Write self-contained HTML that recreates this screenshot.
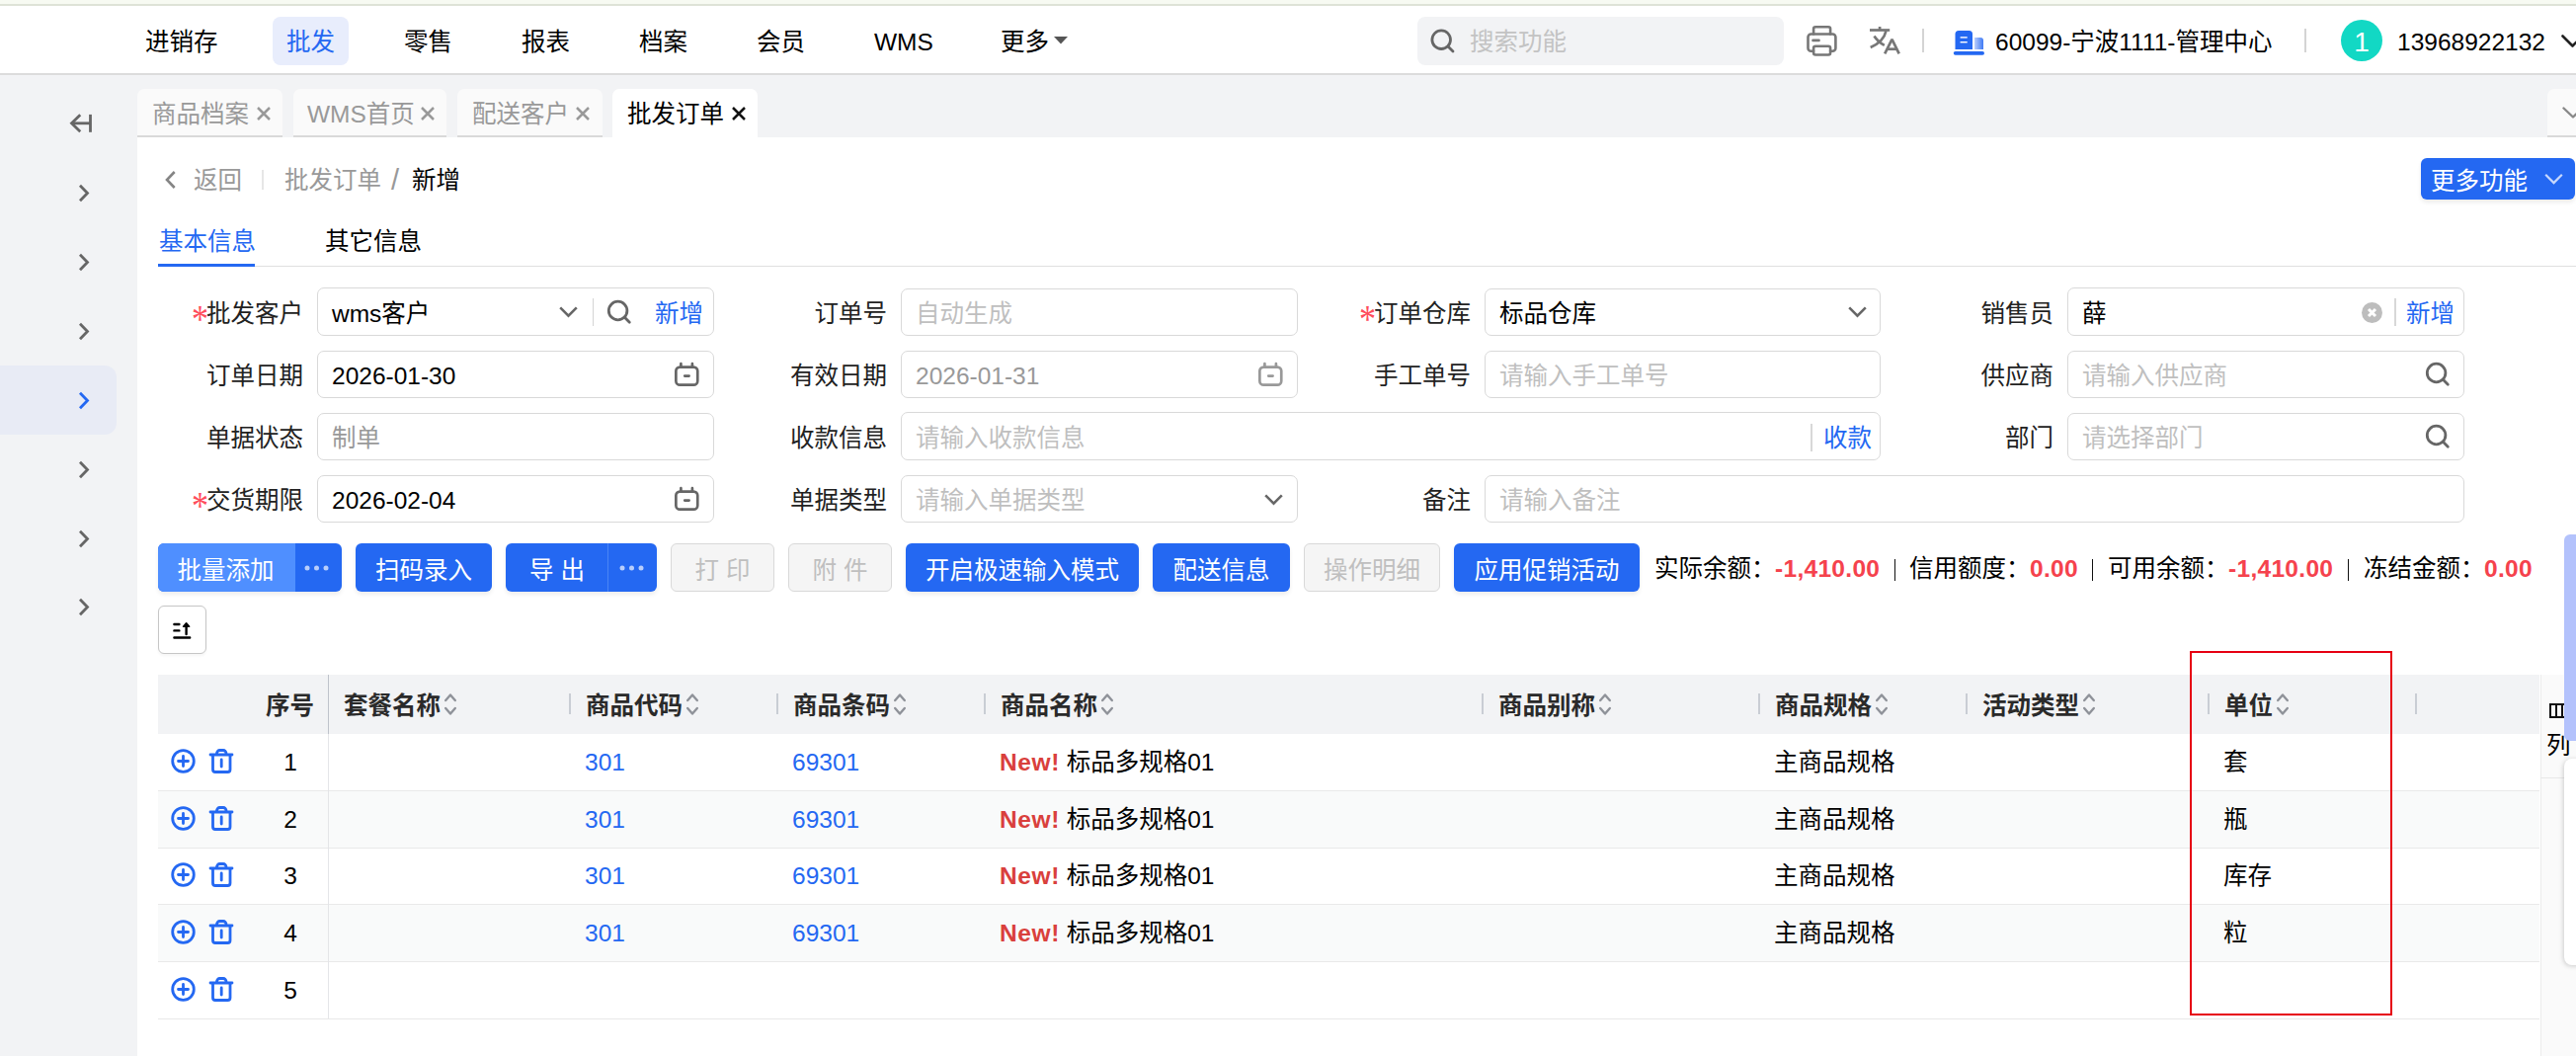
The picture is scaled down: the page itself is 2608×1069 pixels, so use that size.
<!DOCTYPE html>
<html lang="zh-CN">
<head>
<meta charset="utf-8">
<title>批发订单 - 新增</title>
<style>
*{box-sizing:border-box;margin:0;padding:0}
html,body{width:2608px;height:1069px;overflow:hidden;background:#fff}
body{font-family:"Liberation Sans","Noto Sans CJK SC",sans-serif;font-size:24.5px;color:#000;position:relative;line-height:1}
.abs{position:absolute}
.t{position:absolute;white-space:nowrap;line-height:32px;height:32px}
svg{position:absolute;overflow:visible}
#strip{left:0;top:0;width:2608px;height:6px;background:#f7faf2;border-bottom:2px solid #dee3d7}
#topbar{left:0;top:6px;width:2608px;height:70px;background:#fff;border-bottom:2px solid #dcdcdc}
.nav{top:27px}
#pill{left:276px;top:17px;width:77px;height:49px;border-radius:8px;background:#e8edfc}
#search{left:1435px;top:17px;width:371px;height:49px;border-radius:8px;background:#f2f3f5}
.vdiv{width:2px;background:#d4d4d4}
#graybg{left:0;top:76px;width:2608px;height:993px;background:#f2f3f5}
#content{left:139px;top:139px;width:2469px;height:930px;background:#fff}
.tab{top:90px;height:49px;border-radius:7px 7px 0 0;background:#fafafa;border-bottom:2px solid #d9d9d9}
.tab.on{background:#fff;border-bottom:none}
.tabt{top:100px;color:#999}
#sideon{left:0;top:370px;width:118px;height:70px;border-radius:0 12px 12px 0;background:#e8ebf5}
.inp{height:48px;border:1px solid #d9d9d9;border-radius:7px;background:#fff}
.lab{text-align:right;color:#222}
.ph{color:#bfbfbf}
.gr{color:#999}
.ls{letter-spacing:0}
.blue{color:#2468f2}
.star{color:#ff4d5c;font-family:"Liberation Serif",serif;font-size:34px;line-height:34px;width:17px;height:34px;text-align:center;transform:scaleY(1.15)}
.btn{top:550px;height:49px;border-radius:6px;background:#2468f2;color:#fff;text-align:center;line-height:49px;padding-top:3px;white-space:nowrap;box-shadow:0 3px 4px rgba(0,0,0,.07)}
.btn.dis{background:#f5f5f5;border:1px solid #d9d9d9;color:#bfbfbf;line-height:47px;padding-top:3px;box-shadow:none}
.red{color:#f5424d;font-weight:bold;letter-spacing:.3px}
#thead{left:160px;top:683px;width:2411px;height:60px;background:#f2f3f5}
.th{top:699px;font-weight:bold;color:#2a2a2a}
.cd{top:702px;width:2px;height:21px;background:#c9cdd4}
.row{left:160px;width:2412px;border-bottom:1px solid #e9e9e9}
.row.alt{background:#f9fafa}
.new{color:#d9403c;letter-spacing:.6px}
</style>
</head>
<body>
<div class="abs" id="graybg"></div>
<div class="abs" id="strip"></div>
<div class="abs" id="topbar"></div>
<div class="abs" id="content"></div>
<div class="abs" id="pill"></div>
<div class="t nav" style="left:147px">进销存</div>
<div class="t nav blue" style="left:290px">批发</div>
<div class="t nav" style="left:409px">零售</div>
<div class="t nav" style="left:528px">报表</div>
<div class="t nav" style="left:647px">档案</div>
<div class="t nav" style="left:766px">会员</div>
<div class="t nav" style="left:885px">WMS</div>
<div class="t nav" style="left:1013px">更多</div>
<svg style="left:1067px;top:37px" width="14" height="8" viewBox="0 0 14 8"><path d="M0 0h14l-7 7.500z" fill="#555"/></svg>
<div class="abs" id="search"></div>
<svg style="left:1448px;top:29px" width="25" height="25" viewBox="0 0 25 25" fill="none" stroke="#666" stroke-width="2.800" stroke-linecap="round"><circle cx="11.200" cy="11.200" r="9.300"/><path d="M18 18l5 5"/></svg>
<div class="t nav" style="left:1488px;color:#c3c3c3">搜索功能</div>
<svg style="left:1828px;top:25px" width="33" height="33" viewBox="0 0 33 33" fill="none" stroke="#777" stroke-width="2.600" stroke-linejoin="round" stroke-linecap="round"><path d="M8 26.800H5.500a3 3 0 0 1-3-3V12.500a3 3 0 0 1 3-3H27.400a3 3 0 0 1 3 3V23.800a3 3 0 0 1-3 3H25.100"/><path d="M8.100 9.500V4.300a2 2 0 0 1 2-2H23.100a2 2 0 0 1 2 2V9.500"/><rect x="8.100" y="21.700" width="17" height="8.800" rx="2"/><path d="M7.500 15.900H13.500"/></svg>
<svg style="left:1892px;top:26px" width="32" height="30" viewBox="0 0 32 30" fill="none" stroke="#777" stroke-width="2.700"><path d="M1 4.500H21.200"/><path d="M11.100 1V4.500"/><path d="M17.500 5.300C16 12 10 18.500 1.700 22"/><path d="M5.500 10.500C8 14.500 11.500 17.500 15.800 19.900"/><path d="M16.200 28.400L23.500 13.800L30.700 28.400" stroke-linejoin="bevel"/><path d="M18.800 23.700H28.200"/></svg>
<div class="abs vdiv" style="left:1946px;top:29px;height:24px"></div>
<svg style="left:1977px;top:30px" width="33" height="27" viewBox="0 0 33 27"><path d="M2.500 20.100V4.400a3.500 3.500 0 0 1 3.500-3.500H16.500a3.500 3.500 0 0 1 3.500 3.500V20.100Z" fill="#2468f2"/><rect x="7.600" y="7.200" width="7.100" height="1.400" fill="#fff"/><rect x="7.600" y="12" width="7.100" height="1.400" fill="#fff"/><rect x="0.800" y="22" width="31.200" height="3.700" rx="1.850" fill="#2468f2"/></svg>
<div class="abs" style="left:1999px;top:38px;width:9px;height:12px;border-radius:0 3px 0 0;background:linear-gradient(to right,#b9cdfb,#3f7af5)"></div>
<div class="t nav" style="left:2020px">60099-宁波1111-管理中心</div>
<div class="abs vdiv" style="left:2333px;top:29px;height:24px"></div>
<div class="abs" style="left:2370px;top:20px;width:42px;height:42px;border-radius:21px;background:#12d8c4"></div>
<div class="t nav" style="left:2370px;width:42px;text-align:center;color:#fff;font-size:28px">1</div>
<div class="t nav" style="left:2427px">13968922132</div>
<svg style="left:2593px;top:35px" width="24" height="13" viewBox="0 0 24 13" fill="none" stroke="#222" stroke-width="2.600" stroke-linecap="round" stroke-linejoin="round"><path d="M1.500 1.500l10 10 10-10"/></svg>
<div class="abs tab" style="left:139px;width:147px"></div>
<div class="abs tab" style="left:297px;width:155px"></div>
<div class="abs tab" style="left:463px;width:147px"></div>
<div class="abs tab on" style="left:620px;width:147px"></div>
<div class="abs tab" style="left:2579px;width:40px"></div>
<div class="t tabt" style="left:154px">商品档案</div>
<div class="t tabt" style="left:311px">WMS首页</div>
<div class="t tabt" style="left:478px">配送客户</div>
<div class="t tabt" style="left:635px;color:#000">批发订单</div>
<svg style="left:260px;top:108px" width="14" height="14" viewBox="0 0 14 14" stroke="#999" stroke-width="2.500" fill="none"><path d="M1 1l12 12M13 1L1 13"/></svg>
<svg style="left:426px;top:108px" width="14" height="14" viewBox="0 0 14 14" stroke="#999" stroke-width="2.500" fill="none"><path d="M1 1l12 12M13 1L1 13"/></svg>
<svg style="left:583px;top:108px" width="14" height="14" viewBox="0 0 14 14" stroke="#999" stroke-width="2.500" fill="none"><path d="M1 1l12 12M13 1L1 13"/></svg>
<svg style="left:741px;top:108px" width="14" height="14" viewBox="0 0 14 14" stroke="#111" stroke-width="2.500" fill="none"><path d="M1 1l12 12M13 1L1 13"/></svg>
<svg style="left:2594px;top:108px" width="22" height="12" viewBox="0 0 22 12" fill="none" stroke="#888" stroke-width="2.400" stroke-linecap="round" stroke-linejoin="round"><path d="M1.500 1.500l9.500 9 9.500-9"/></svg>
<div class="abs" id="sideon"></div>
<svg style="left:70px;top:114px" width="24" height="22" viewBox="0 0 24 22" fill="none" stroke="#666" stroke-width="2.800"><path d="M3 10.800H21"/><path d="M11.250 2.300L2.500 10.800l8.750 8.500"/><path d="M21.500 1.900v17.900"/></svg>
<svg style="left:79px;top:186px" width="12" height="19" viewBox="0 0 12 19" fill="none" stroke="#666" stroke-width="2.800"><path d="M2 1.800l7.500 7.700-7.500 7.700"/></svg>
<svg style="left:79px;top:256px" width="12" height="19" viewBox="0 0 12 19" fill="none" stroke="#666" stroke-width="2.800"><path d="M2 1.800l7.500 7.700-7.500 7.700"/></svg>
<svg style="left:79px;top:326px" width="12" height="19" viewBox="0 0 12 19" fill="none" stroke="#666" stroke-width="2.800"><path d="M2 1.800l7.500 7.700-7.500 7.700"/></svg>
<svg style="left:79px;top:396px" width="12" height="19" viewBox="0 0 12 19" fill="none" stroke="#2468f2" stroke-width="2.800"><path d="M2 1.800l7.500 7.700-7.500 7.700"/></svg>
<svg style="left:79px;top:466px" width="12" height="19" viewBox="0 0 12 19" fill="none" stroke="#666" stroke-width="2.800"><path d="M2 1.800l7.500 7.700-7.500 7.700"/></svg>
<svg style="left:79px;top:536px" width="12" height="19" viewBox="0 0 12 19" fill="none" stroke="#666" stroke-width="2.800"><path d="M2 1.800l7.500 7.700-7.500 7.700"/></svg>
<svg style="left:79px;top:605px" width="12" height="19" viewBox="0 0 12 19" fill="none" stroke="#666" stroke-width="2.800"><path d="M2 1.800l7.500 7.700-7.500 7.700"/></svg>
<svg style="left:166px;top:172px" width="13" height="20" viewBox="0 0 13 20" fill="none" stroke="#858585" stroke-width="2.600"><path d="M10.700 2L3 10l7.700 8"/></svg>
<div class="t" style="left:196px;top:167px;color:#999">返回</div>
<div class="abs" style="left:265px;top:172px;width:2px;height:20px;background:#e6e6e6"></div>
<div class="t" style="left:288px;top:167px;color:#999">批发订单</div>
<div class="t" style="left:396px;top:166px;color:#999;font-size:29px">/</div>
<div class="t" style="left:417px;top:167px;color:#000">新增</div>
<div class="abs" style="left:2451px;top:160px;width:156px;height:42px;border-radius:6px;background:#2468f2;box-shadow:0 3px 4px rgba(0,0,0,.08)"></div>
<div class="t" style="left:2461px;top:168px;color:#fff">更多功能</div>
<svg style="left:2576px;top:175px" width="19" height="12" viewBox="0 0 19 12" fill="none" stroke="#c8d8fc" stroke-width="2.200"><path d="M1.200 1.800l8.300 8.300 8.300-8.300"/></svg>
<div class="t blue" style="left:161px;top:229px">基本信息</div>
<div class="t" style="left:329px;top:229px">其它信息</div>
<div class="abs" style="left:160px;top:269px;width:2448px;height:1px;background:#e0e0e0"></div>
<div class="abs" style="left:160px;top:267px;width:98px;height:3px;background:#2468f2"></div>
<div class="abs inp" style="left:321px;top:291px;width:402px;height:49px"></div>
<div class="abs inp" style="left:321px;top:355px;width:402px;height:48px"></div>
<div class="abs inp" style="left:321px;top:418px;width:402px;height:48px"></div>
<div class="abs inp" style="left:321px;top:481px;width:402px;height:48px"></div>
<div class="abs inp" style="left:912px;top:292px;width:402px;height:48px"></div>
<div class="abs inp" style="left:912px;top:355px;width:402px;height:48px"></div>
<div class="abs inp" style="left:912px;top:417px;width:992px;height:49px"></div>
<div class="abs inp" style="left:912px;top:481px;width:402px;height:48px"></div>
<div class="abs inp" style="left:1503px;top:292px;width:401px;height:48px"></div>
<div class="abs inp" style="left:1503px;top:355px;width:401px;height:48px"></div>
<div class="abs inp" style="left:1503px;top:481px;width:992px;height:48px"></div>
<div class="abs inp" style="left:2093px;top:291px;width:402px;height:49px"></div>
<div class="abs inp" style="left:2093px;top:355px;width:402px;height:48px"></div>
<div class="abs inp" style="left:2093px;top:418px;width:402px;height:48px"></div>
<div class="t lab" style="left:147px;top:302px;width:160px">批发客户</div>
<div class="abs star" style="left:194.0px;top:306px">*</div>
<div class="t lab" style="left:147px;top:365px;width:160px">订单日期</div>
<div class="t lab" style="left:147px;top:428px;width:160px">单据状态</div>
<div class="t lab" style="left:147px;top:491px;width:160px">交货期限</div>
<div class="abs star" style="left:194.0px;top:495px">*</div>
<div class="t lab" style="left:738px;top:302px;width:160px">订单号</div>
<div class="t lab" style="left:738px;top:365px;width:160px">有效日期</div>
<div class="t lab" style="left:738px;top:428px;width:160px">收款信息</div>
<div class="t lab" style="left:738px;top:491px;width:160px">单据类型</div>
<div class="t lab" style="left:1329px;top:302px;width:160px">订单仓库</div>
<div class="abs star" style="left:1376.0px;top:306px">*</div>
<div class="t lab" style="left:1329px;top:365px;width:160px">手工单号</div>
<div class="t lab" style="left:1329px;top:491px;width:160px">备注</div>
<div class="t lab" style="left:1919px;top:302px;width:160px">销售员</div>
<div class="t lab" style="left:1919px;top:365px;width:160px">供应商</div>
<div class="t lab" style="left:1919px;top:428px;width:160px">部门</div>
<div class="t" style="left:336px;top:302px">wms客户</div>
<div class="t ls" style="left:336px;top:365px">2026-01-30</div>
<div class="t gr" style="left:336px;top:428px">制单</div>
<div class="t ls" style="left:336px;top:491px">2026-02-04</div>
<div class="t ph" style="left:927px;top:302px">自动生成</div>
<div class="t gr ls" style="left:927px;top:365px">2026-01-31</div>
<div class="t ph" style="left:927px;top:428px">请输入收款信息</div>
<div class="t ph" style="left:927px;top:491px">请输入单据类型</div>
<div class="t" style="left:1518px;top:302px">标品仓库</div>
<div class="t ph" style="left:1518px;top:365px">请输入手工单号</div>
<div class="t ph" style="left:1518px;top:491px">请输入备注</div>
<div class="t" style="left:2108px;top:302px">薛</div>
<div class="t ph" style="left:2108px;top:365px">请输入供应商</div>
<div class="t ph" style="left:2108px;top:428px">请选择部门</div>
<svg style="left:566px;top:310px" width="19" height="11" viewBox="0 0 19 11" fill="none" stroke="#666" stroke-width="2.600"><path d="M1.200 1.400l8.300 8.200 8.300-8.200"/></svg>
<div class="abs" style="left:600px;top:302px;width:1px;height:28px;background:#d4d4d4"></div>
<svg style="left:615px;top:304px" width="24" height="24" viewBox="0 0 24 24" fill="none" stroke="#666" stroke-width="2.800" stroke-linecap="round"><circle cx="10.600" cy="10.500" r="9.300"/><path d="M17.400 17.300l4.900 4.900"/></svg>
<div class="t blue" style="left:663px;top:302px">新增</div>
<svg style="left:683px;top:367px" width="25" height="24" viewBox="0 0 25 24" fill="none" stroke="#666" stroke-width="2.700" stroke-linecap="round" stroke-linejoin="round"><rect x="1.350" y="4.550" width="21.900" height="18.100" rx="4"/><path d="M6.400 1.200V4.500M17.900 1.200V4.500M10.200 13.600H14.600"/></svg>
<svg style="left:683px;top:493px" width="25" height="24" viewBox="0 0 25 24" fill="none" stroke="#666" stroke-width="2.700" stroke-linecap="round" stroke-linejoin="round"><rect x="1.350" y="4.550" width="21.900" height="18.100" rx="4"/><path d="M6.400 1.200V4.500M17.900 1.200V4.500M10.200 13.600H14.600"/></svg>
<svg style="left:1274px;top:367px" width="25" height="24" viewBox="0 0 25 24" fill="none" stroke="#999" stroke-width="2.700" stroke-linecap="round" stroke-linejoin="round"><rect x="1.350" y="4.550" width="21.900" height="18.100" rx="4"/><path d="M6.400 1.200V4.500M17.900 1.200V4.500M10.200 13.600H14.600"/></svg>
<svg style="left:1280px;top:500px" width="19" height="11" viewBox="0 0 19 11" fill="none" stroke="#666" stroke-width="2.600"><path d="M1.200 1.400l8.300 8.200 8.300-8.200"/></svg>
<svg style="left:1871px;top:310px" width="19" height="11" viewBox="0 0 19 11" fill="none" stroke="#666" stroke-width="2.600"><path d="M1.200 1.400l8.300 8.200 8.300-8.200"/></svg>
<div class="abs" style="left:1833px;top:429px;width:2px;height:28px;background:#d8d8d8"></div>
<div class="t blue" style="left:1846px;top:428px">收款</div>
<svg style="left:2391px;top:306px" width="21" height="21" viewBox="0 0 21 21"><circle cx="10.500" cy="10.500" r="10.450" fill="#bdbdbd"/><path d="M7 7l7 7M14 7l-7 7" stroke="#fff" stroke-width="3" stroke-linecap="butt"/></svg>
<div class="abs" style="left:2424px;top:302px;width:2px;height:28px;background:#d8d8d8"></div>
<div class="t blue" style="left:2436px;top:302px">新增</div>
<svg style="left:2456px;top:367px" width="24" height="24" viewBox="0 0 24 24" fill="none" stroke="#666" stroke-width="2.800" stroke-linecap="round"><circle cx="10.600" cy="10.500" r="9.300"/><path d="M17.400 17.300l4.900 4.900"/></svg>
<svg style="left:2456px;top:430px" width="24" height="24" viewBox="0 0 24 24" fill="none" stroke="#666" stroke-width="2.800" stroke-linecap="round"><circle cx="10.600" cy="10.500" r="9.300"/><path d="M17.400 17.300l4.900 4.900"/></svg>
<div class="abs btn" style="left:160px;width:186px"></div>
<div class="abs" style="left:160px;top:550px;width:139px;height:49px;border-radius:6px 0 0 6px;background:#4f8fff;color:#fff;text-align:center;line-height:49px;padding-top:3px;padding-right:2px">批量添加</div>
<svg style="left:308px;top:572px" width="25" height="6" viewBox="0 0 25 6" fill="#b9cefb"><circle cx="3" cy="3" r="2.500"/><circle cx="12.500" cy="3" r="2.500"/><circle cx="22" cy="3" r="2.500"/></svg>
<div class="abs btn" style="left:360px;width:138px">扫码录入</div>
<div class="abs btn" style="left:512px;width:153px"></div>
<div class="abs" style="left:512px;top:550px;width:104px;height:49px;color:#fff;text-align:center;line-height:49px;padding-top:3px">导 出</div>
<div class="abs" style="left:615px;top:550px;width:1px;height:49px;background:#4a84f5"></div>
<svg style="left:627px;top:572px" width="25" height="6" viewBox="0 0 25 6" fill="#b9cefb"><circle cx="3" cy="3" r="2.500"/><circle cx="12.500" cy="3" r="2.500"/><circle cx="22" cy="3" r="2.500"/></svg>
<div class="abs btn dis" style="left:679px;width:105px">打 印</div>
<div class="abs btn dis" style="left:798px;width:105px">附 件</div>
<div class="abs btn" style="left:917px;width:236px">开启极速输入模式</div>
<div class="abs btn" style="left:1167px;width:139px">配送信息</div>
<div class="abs btn dis" style="left:1320px;width:138px">操作明细</div>
<div class="abs btn" style="left:1472px;width:188px">应用促销活动</div>
<div class="t" style="left:1675px;top:560px">实际余额：</div>
<div class="t red" style="left:1797px;top:560px">-1,410.00</div>
<div class="t" style="left:1933px;top:560px">信用额度：</div>
<div class="t red" style="left:2055px;top:560px">0.00</div>
<div class="t" style="left:2134px;top:560px">可用余额：</div>
<div class="t red" style="left:2256px;top:560px">-1,410.00</div>
<div class="t" style="left:2393px;top:560px">冻结金额：</div>
<div class="t red" style="left:2515px;top:560px">0.00</div>
<div class="abs" style="left:1918px;top:566px;width:1px;height:22px;background:#111"></div>
<div class="abs" style="left:2118px;top:566px;width:1px;height:22px;background:#111"></div>
<div class="abs" style="left:2377px;top:566px;width:1px;height:22px;background:#111"></div>
<div class="abs" style="left:160px;top:613px;width:49px;height:49px;border:1px solid #c6c6c6;border-radius:6px;background:#fff;box-shadow:0 2px 3px rgba(0,0,0,.04)"></div>
<svg style="left:174px;top:629px" width="21" height="19" viewBox="0 0 21 19" fill="none" stroke="#000" stroke-width="2.400" stroke-linecap="round" stroke-linejoin="round"><path d="M2.400 3H7.400M2.400 9.400H7.400M2.400 16.500H18.200M14.600 5V13"/><path d="M14.600 1.800L11.600 5.200H17.600Z" fill="#000" stroke-width="1.600"/></svg>
<div class="abs" id="thead"></div>
<div class="abs" style="left:160px;top:800px;width:2411px;height:1px;background:#e9e9e9"></div>
<div class="abs" style="left:160px;top:801px;width:2411px;height:57px;background:#f9fafa"></div>
<div class="abs" style="left:160px;top:858px;width:2411px;height:1px;background:#e9e9e9"></div>
<div class="abs" style="left:160px;top:915px;width:2411px;height:1px;background:#e9e9e9"></div>
<div class="abs" style="left:160px;top:916px;width:2411px;height:57px;background:#f9fafa"></div>
<div class="abs" style="left:160px;top:973px;width:2411px;height:1px;background:#e9e9e9"></div>
<div class="abs" style="left:160px;top:1031px;width:2411px;height:1px;background:#e9e9e9"></div>
<div class="abs" style="left:332px;top:683px;width:1px;height:348px;background:#e4e5e8"></div>
<div class="abs" style="left:332px;top:683px;width:1px;height:60px;background:#bfc3cb"></div>
<div class="abs cd" style="left:576px"></div>
<div class="abs cd" style="left:786px"></div>
<div class="abs cd" style="left:996px"></div>
<div class="abs cd" style="left:1500px"></div>
<div class="abs cd" style="left:1780px"></div>
<div class="abs cd" style="left:1990px"></div>
<div class="abs cd" style="left:2235px"></div>
<div class="abs cd" style="left:2445px"></div>
<div class="t th" style="left:269px">序号</div>
<div class="t th" style="left:348px">套餐名称</div>
<svg style="left:450px;top:701px" width="12" height="24" viewBox="0 0 12 24" fill="none" stroke="#8f9299" stroke-width="2.400" stroke-linecap="round" stroke-linejoin="round"><path d="M1.200 8l4.800-5.500 4.800 5.500M1.200 16l4.800 5.500 4.800-5.500"/></svg>
<div class="t th" style="left:593px">商品代码</div>
<svg style="left:695px;top:701px" width="12" height="24" viewBox="0 0 12 24" fill="none" stroke="#8f9299" stroke-width="2.400" stroke-linecap="round" stroke-linejoin="round"><path d="M1.200 8l4.800-5.500 4.800 5.500M1.200 16l4.800 5.500 4.800-5.500"/></svg>
<div class="t th" style="left:803px">商品条码</div>
<svg style="left:905px;top:701px" width="12" height="24" viewBox="0 0 12 24" fill="none" stroke="#8f9299" stroke-width="2.400" stroke-linecap="round" stroke-linejoin="round"><path d="M1.200 8l4.800-5.500 4.800 5.500M1.200 16l4.800 5.500 4.800-5.500"/></svg>
<div class="t th" style="left:1013px">商品名称</div>
<svg style="left:1115px;top:701px" width="12" height="24" viewBox="0 0 12 24" fill="none" stroke="#8f9299" stroke-width="2.400" stroke-linecap="round" stroke-linejoin="round"><path d="M1.200 8l4.800-5.500 4.800 5.500M1.200 16l4.800 5.500 4.800-5.500"/></svg>
<div class="t th" style="left:1517px">商品别称</div>
<svg style="left:1619px;top:701px" width="12" height="24" viewBox="0 0 12 24" fill="none" stroke="#8f9299" stroke-width="2.400" stroke-linecap="round" stroke-linejoin="round"><path d="M1.200 8l4.800-5.500 4.800 5.500M1.200 16l4.800 5.500 4.800-5.500"/></svg>
<div class="t th" style="left:1797px">商品规格</div>
<svg style="left:1899px;top:701px" width="12" height="24" viewBox="0 0 12 24" fill="none" stroke="#8f9299" stroke-width="2.400" stroke-linecap="round" stroke-linejoin="round"><path d="M1.200 8l4.800-5.500 4.800 5.500M1.200 16l4.800 5.500 4.800-5.500"/></svg>
<div class="t th" style="left:2007px">活动类型</div>
<svg style="left:2109px;top:701px" width="12" height="24" viewBox="0 0 12 24" fill="none" stroke="#8f9299" stroke-width="2.400" stroke-linecap="round" stroke-linejoin="round"><path d="M1.200 8l4.800-5.500 4.800 5.500M1.200 16l4.800 5.500 4.800-5.500"/></svg>
<div class="t th" style="left:2252px">单位</div>
<svg style="left:2305px;top:701px" width="12" height="24" viewBox="0 0 12 24" fill="none" stroke="#8f9299" stroke-width="2.400" stroke-linecap="round" stroke-linejoin="round"><path d="M1.200 8l4.800-5.500 4.800 5.500M1.200 16l4.800 5.500 4.800-5.500"/></svg>
<svg style="left:173px;top:758px" width="25" height="25" viewBox="0 0 25 25" fill="none" stroke="#2468f2" stroke-width="2.800" stroke-linecap="round"><circle cx="12.500" cy="12.500" r="10.800"/><path d="M7.500 12.500h10M12.500 7.500v10"/></svg>
<svg style="left:211px;top:757px" width="26" height="26" viewBox="0 0 26 26" fill="none" stroke="#2468f2" stroke-width="2.800" stroke-linecap="round" stroke-linejoin="round"><path d="M2 7h22M8.500 6.500V5.500A3 3 0 0 1 11.500 2.500h3.500a3 3 0 0 1 3 3V6.500"/><path d="M4.500 7.500V22a2.500 2.500 0 0 0 2.500 2.500h12.500a2.500 2.500 0 0 0 2.500-2.500V7.500"/><path d="M13.200 12v7"/></svg>
<div class="t" style="left:270px;top:756px;width:48px;text-align:center">1</div>
<div class="t blue" style="left:592px;top:756px">301</div>
<div class="t blue" style="left:802px;top:756px">69301</div>
<div class="t" style="left:1012px;top:756px"><b class="new">New!</b> 标品多规格01</div>
<div class="t" style="left:1796px;top:756px">主商品规格</div>
<div class="t" style="left:2251px;top:756px">套</div>
<svg style="left:173px;top:816px" width="25" height="25" viewBox="0 0 25 25" fill="none" stroke="#2468f2" stroke-width="2.800" stroke-linecap="round"><circle cx="12.500" cy="12.500" r="10.800"/><path d="M7.500 12.500h10M12.500 7.500v10"/></svg>
<svg style="left:211px;top:815px" width="26" height="26" viewBox="0 0 26 26" fill="none" stroke="#2468f2" stroke-width="2.800" stroke-linecap="round" stroke-linejoin="round"><path d="M2 7h22M8.500 6.500V5.500A3 3 0 0 1 11.500 2.500h3.500a3 3 0 0 1 3 3V6.500"/><path d="M4.500 7.500V22a2.500 2.500 0 0 0 2.500 2.500h12.500a2.500 2.500 0 0 0 2.500-2.500V7.500"/><path d="M13.200 12v7"/></svg>
<div class="t" style="left:270px;top:814px;width:48px;text-align:center">2</div>
<div class="t blue" style="left:592px;top:814px">301</div>
<div class="t blue" style="left:802px;top:814px">69301</div>
<div class="t" style="left:1012px;top:814px"><b class="new">New!</b> 标品多规格01</div>
<div class="t" style="left:1796px;top:814px">主商品规格</div>
<div class="t" style="left:2251px;top:814px">瓶</div>
<svg style="left:173px;top:873px" width="25" height="25" viewBox="0 0 25 25" fill="none" stroke="#2468f2" stroke-width="2.800" stroke-linecap="round"><circle cx="12.500" cy="12.500" r="10.800"/><path d="M7.500 12.500h10M12.500 7.500v10"/></svg>
<svg style="left:211px;top:872px" width="26" height="26" viewBox="0 0 26 26" fill="none" stroke="#2468f2" stroke-width="2.800" stroke-linecap="round" stroke-linejoin="round"><path d="M2 7h22M8.500 6.500V5.500A3 3 0 0 1 11.500 2.500h3.500a3 3 0 0 1 3 3V6.500"/><path d="M4.500 7.500V22a2.500 2.500 0 0 0 2.500 2.500h12.500a2.500 2.500 0 0 0 2.500-2.500V7.500"/><path d="M13.200 12v7"/></svg>
<div class="t" style="left:270px;top:871px;width:48px;text-align:center">3</div>
<div class="t blue" style="left:592px;top:871px">301</div>
<div class="t blue" style="left:802px;top:871px">69301</div>
<div class="t" style="left:1012px;top:871px"><b class="new">New!</b> 标品多规格01</div>
<div class="t" style="left:1796px;top:871px">主商品规格</div>
<div class="t" style="left:2251px;top:871px">库存</div>
<svg style="left:173px;top:931px" width="25" height="25" viewBox="0 0 25 25" fill="none" stroke="#2468f2" stroke-width="2.800" stroke-linecap="round"><circle cx="12.500" cy="12.500" r="10.800"/><path d="M7.500 12.500h10M12.500 7.500v10"/></svg>
<svg style="left:211px;top:930px" width="26" height="26" viewBox="0 0 26 26" fill="none" stroke="#2468f2" stroke-width="2.800" stroke-linecap="round" stroke-linejoin="round"><path d="M2 7h22M8.500 6.500V5.500A3 3 0 0 1 11.500 2.500h3.500a3 3 0 0 1 3 3V6.500"/><path d="M4.500 7.500V22a2.500 2.500 0 0 0 2.500 2.500h12.500a2.500 2.500 0 0 0 2.500-2.500V7.500"/><path d="M13.200 12v7"/></svg>
<div class="t" style="left:270px;top:929px;width:48px;text-align:center">4</div>
<div class="t blue" style="left:592px;top:929px">301</div>
<div class="t blue" style="left:802px;top:929px">69301</div>
<div class="t" style="left:1012px;top:929px"><b class="new">New!</b> 标品多规格01</div>
<div class="t" style="left:1796px;top:929px">主商品规格</div>
<div class="t" style="left:2251px;top:929px">粒</div>
<svg style="left:173px;top:989px" width="25" height="25" viewBox="0 0 25 25" fill="none" stroke="#2468f2" stroke-width="2.800" stroke-linecap="round"><circle cx="12.500" cy="12.500" r="10.800"/><path d="M7.500 12.500h10M12.500 7.500v10"/></svg>
<svg style="left:211px;top:988px" width="26" height="26" viewBox="0 0 26 26" fill="none" stroke="#2468f2" stroke-width="2.800" stroke-linecap="round" stroke-linejoin="round"><path d="M2 7h22M8.500 6.500V5.500A3 3 0 0 1 11.500 2.500h3.500a3 3 0 0 1 3 3V6.500"/><path d="M4.500 7.500V22a2.500 2.500 0 0 0 2.500 2.500h12.500a2.500 2.500 0 0 0 2.500-2.500V7.500"/><path d="M13.200 12v7"/></svg>
<div class="t" style="left:270px;top:987px;width:48px;text-align:center">5</div>
<div class="abs" style="left:2217px;top:659px;width:205px;height:369px;border:2px solid #e60012"></div>
<div class="abs" style="left:2572px;top:683px;width:36px;height:386px;background:#fafafa;border-left:1px solid #ececec"></div>
<div class="abs" style="left:2572px;top:787px;width:36px;height:1px;background:#e8e8e8"></div>
<svg style="left:2581px;top:712px" width="20" height="15" viewBox="0 0 20 15" fill="none" stroke="#111" stroke-width="2"><rect x="1" y="1" width="18" height="13"/><path d="M7 1v13M13 1v13"/></svg>
<div class="t" style="left:2578px;top:739px">列</div>
<div class="abs" style="left:2596px;top:541px;width:20px;height:209px;border-radius:6px 0 0 6px;background:#b3c2fc"></div>
<div class="abs" style="left:2596px;top:768px;width:20px;height:209px;border-radius:8px 0 0 8px;background:#fff;box-shadow:-1px 1px 5px rgba(0,0,0,.18)"></div>
</body>
</html>
